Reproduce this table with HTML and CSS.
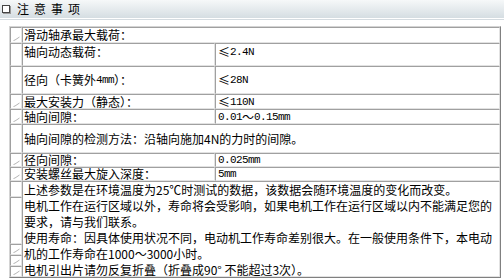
FILE: index.html
```html
<!DOCTYPE html>
<html>
<head>
<meta charset="utf-8">
<link rel="stylesheet" href="styles.css">
</head>
<body>
<div class="hdr"><span class="box"></span><span class="ttl">注意事项</span></div>
<div class="rule"></div>
<div class="tbl">
  <div class="c ic"><svg class="bi" viewBox="0 0 7 5" width="7" height="5"><path d="M0.5 4.5 L2 4 L6.5 1" fill="none" stroke="#b4b4b4" stroke-width="1"/></svg></div>
  <div class="c span2">滑动轴承最大载荷：</div>

  <div class="c ic"></div>
  <div class="c top">轴向动态载荷：</div>
  <div class="c top v">≤<span class="m">2.4N</span></div>

  <div class="c ic"></div>
  <div class="c">径向（卡簧外<span class="m">4mm</span>）：</div>
  <div class="c v">≤<span class="m">28N</span></div>

  <div class="c ic"><svg class="bi" viewBox="0 0 7 5" width="7" height="5"><path d="M0.5 4.5 L2 4 L6.5 1" fill="none" stroke="#b4b4b4" stroke-width="1"/></svg></div>
  <div class="c">最大安装力（静态）：</div>
  <div class="c v">≤<span class="m">110N</span></div>

  <div class="c ic"><svg class="bi" viewBox="0 0 7 5" width="7" height="5"><path d="M0.5 4.5 L2 4 L6.5 1" fill="none" stroke="#b4b4b4" stroke-width="1"/></svg></div>
  <div class="c">轴向间隙：</div>
  <div class="c v"><span class="m">0.01</span>～<span class="m">0.15mm</span></div>

  <div class="c ic"></div>
  <div class="c span2">轴向间隙的检测方法：沿轴向施加4N的力时的间隙。</div>

  <div class="c ic"><svg class="bi" viewBox="0 0 7 5" width="7" height="5"><path d="M0.5 4.5 L2 4 L6.5 1" fill="none" stroke="#b4b4b4" stroke-width="1"/></svg></div>
  <div class="c">径向间隙：</div>
  <div class="c v"><span class="m">0.025mm</span></div>

  <div class="c ic"><svg class="bi" viewBox="0 0 7 5" width="7" height="5"><path d="M0.5 4.5 L2 4 L6.5 1" fill="none" stroke="#b4b4b4" stroke-width="1"/></svg></div>
  <div class="c">安装螺丝最大旋入深度：</div>
  <div class="c v"><span class="m">5mm</span></div>

  <div class="c ic"></div>
  <div class="c blk">上述参数是在环境温度为25℃时测试的数据，该数据会随环境温度的变化而改变。<br>电机工作在运行区域以外，寿命将会受影响，如果电机工作在运行区域以内不能满足您的<br>要求，请与我们联系。<br>使用寿命：因具体使用状况不同，电动机工作寿命差别很大。在一般使用条件下，本电动<br>机的工作寿命在1000～3000小时。<br>电机引出片请勿反复折叠（折叠成90° 不能超过3次）。</div>
  <div class="c ic"></div>
  <div class="c ic"><svg class="bi" viewBox="0 0 7 5" width="7" height="5"><path d="M0.5 4.5 L2 4 L6.5 1" fill="none" stroke="#b4b4b4" stroke-width="1"/></svg></div>
  <div class="c ic"><svg class="bi" viewBox="0 0 7 5" width="7" height="5"><path d="M0.5 4.5 L2 4 L6.5 1" fill="none" stroke="#b4b4b4" stroke-width="1"/></svg></div>
  <div class="c ic"><svg class="bi" viewBox="0 0 7 5" width="7" height="5"><path d="M0.5 4.5 L2 4 L6.5 1" fill="none" stroke="#b4b4b4" stroke-width="1"/></svg></div>
</div>
</body>
</html>
```

FILE: styles.css
```css
body {
  margin: 0;
  width: 504px;
  height: 280px;
  overflow: hidden;
  background: #fff;
  color: #000;
  font-family: "Noto Sans CJK SC", sans-serif;
  font-size: 12px;
}

.hdr {
  height: 18px;
  background: linear-gradient(#f6f8f9, #d5dde2);
  display: flex;
  align-items: center;
  padding-left: 2px;
}

.box {
  width: 6px;
  height: 6px;
  border: 1px solid #444;
  background: #fff;
  box-shadow: 1px 1px 0 #9a9a9a;
}

.ttl {
  margin-left: 7px;
  letter-spacing: 5px;
  line-height: 12px;
}

.rule {
  margin-top: 1px;
  height: 1px;
  background: #d4dbe0;
}

.tbl {
  margin: 6px 0 0 9px;
  width: 490px;
  display: grid;
  grid-template-columns: 12px 193px 285px;
  grid-template-rows: 16px 23px 28px 15px 15px 29px 14px 14px 16px 47px 11px 11px 11px;
  border: 1px solid;
  border-color: #d4d4d4 #808080 #808080 #d4d4d4;
}

.c {
  box-sizing: border-box;
  border: 1px solid;
  border-color: #a0a0a0 #e2e2e2 #e2e2e2 #a0a0a0;
  display: flex;
  align-items: center;
  padding-left: 1px;
  line-height: 12px;
  white-space: nowrap;
}

.span2 {
  grid-column: span 2;
}

.top {
  align-items: flex-start;
  padding-top: 2px;
}

.v {
  padding-left: 2px;
}

.m {
  font-family: "Liberation Mono", monospace;
  font-size: 11px;
  letter-spacing: -0.6px;
}

.ic {
  padding: 0 0 1px 1px;
  justify-content: flex-start;
  align-items: flex-end;
  overflow: hidden;
}

.bi {
  display: block;
  margin-left: 1px;
}

.blk {
  grid-column: span 2;
  grid-row: span 5;
  display: block;
  line-height: 16px;
}
```
